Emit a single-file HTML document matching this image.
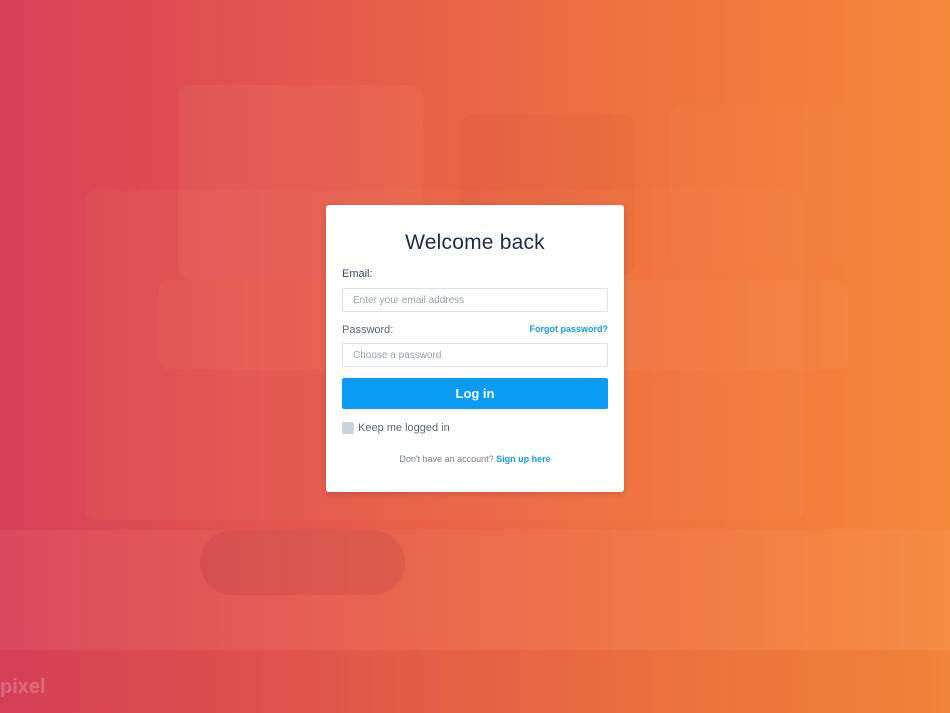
<!DOCTYPE html>
<html><head><meta charset="utf-8"><style>
html,body{margin:0;padding:0}
body{width:950px;height:713px;overflow:hidden;position:relative;font-family:"Liberation Sans",sans-serif;
background:linear-gradient(90deg,#d9405a 0%,#e5594c 35%,#ee7140 65%,#f5893a 100%);}
.s{position:absolute;border-radius:12px}
.card{position:absolute;left:326px;top:205px;width:298px;height:287px;background:#fff;border-radius:3px;box-shadow:0 2px 6px rgba(0,0,0,.15)}
h1{position:absolute;top:26px;left:0;width:100%;text-align:center;margin:0;font-size:21px;font-weight:normal;color:#1d2b4c;letter-spacing:.2px}
.lbl{position:absolute;left:16px;font-size:11px;color:#3d4660}
.inp{position:absolute;left:16px;border:1px solid #dfe2e8;border-radius:2px;font-size:10px;color:#9aa1ad;line-height:22px;padding-left:10px;box-sizing:border-box;width:266px;height:24px}
.btn{position:absolute;left:16px;top:173px;width:266px;height:31px;background:#0a9bf7;border-radius:2px;color:#fff;font-weight:bold;font-size:13px;text-align:center;line-height:31px}
a{color:#119df0;text-decoration:none;font-weight:bold}
</style></head><body>
<div class="s" style="left:85px;top:190px;width:720px;height:330px;background:rgba(255,160,120,.07)"></div>
<div class="s" style="left:158px;top:280px;width:690px;height:90px;background:rgba(255,170,120,.08)"></div>
<div class="s" style="left:178px;top:85px;width:245px;height:195px;background:rgba(255,180,160,.07)"></div>
<div class="s" style="left:460px;top:115px;width:175px;height:160px;background:rgba(150,40,20,.05)"></div>
<div class="s" style="left:670px;top:105px;width:180px;height:160px;background:rgba(255,160,100,.06)"></div>
<div class="s" style="left:0;top:530px;width:950px;height:120px;background:rgba(255,190,160,.08);border-radius:0"></div>
<div class="s" style="left:200px;top:530px;width:205px;height:65px;border-radius:40px;background:rgba(110,20,30,.10)"></div>
<div class="s" style="left:0;top:650px;width:950px;height:63px;background:rgba(120,20,30,.04);border-radius:0"></div>
<div class="card">
<h1>Welcome back</h1>
<div class="lbl" style="top:63px">Email:</div>
<div class="inp" style="top:83px;line-height:23px">Enter your email address</div>
<div class="lbl" style="top:119px;color:#5d6478">Password:</div>
<div style="position:absolute;right:16px;top:119px;font-size:9px"><a>Forgot password?</a></div>
<div class="inp" style="top:138px;line-height:23px">Choose a password</div>
<div class="btn">Log in</div>
<div style="position:absolute;left:16px;top:217px;width:12px;height:12px;background:#cdd2da;border-radius:2px"></div>
<div style="position:absolute;left:32px;top:217px;font-size:11px;color:#5d6478">Keep me logged in</div>
<div style="position:absolute;left:0;width:100%;top:249px;text-align:center;font-size:9px;color:#7a8090">Don't have an account? <a>Sign up here</a></div>
</div>
<div style="position:absolute;left:0;top:676px;font-size:20px;color:rgba(255,255,255,.22);font-weight:bold">pixel</div>
</body></html>
